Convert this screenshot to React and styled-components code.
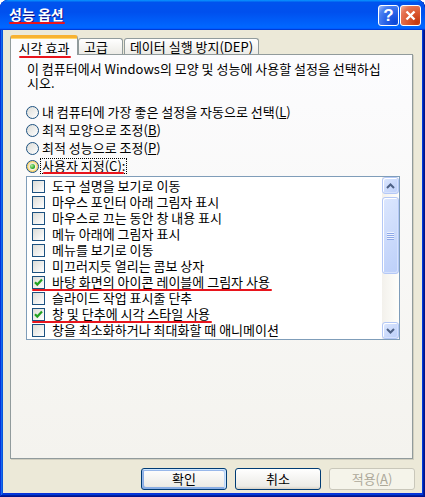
import React from 'react';
import styled, { createGlobalStyle, css } from 'styled-components';

const FONT = `"Noto Sans CJK KR", "Noto Sans", sans-serif`;

const Global = createGlobalStyle`
  html, body { margin: 0; padding: 0; background: #fff; }
  body { font-family: ${FONT}; font-size: 13px; color: #000; }
`;

const Window = styled.div`
  width: 425px;
  height: 497px;
  box-sizing: border-box;
  display: flex;
  flex-direction: column;
  background: #0831d9;
  border-radius: 8px 8px 0 0;
  box-shadow: inset -1px -1px #00138c, inset 1px 1px #0831d9, inset -2px -2px #001ea0,
    inset 2px 2px #166aee, inset -3px -3px #003bda, inset 3px 3px #0855dd;
  overflow: hidden;
`;

const TitleBar = styled.div`
  height: 30px;
  flex: none;
  display: flex;
  align-items: flex-start;
  justify-content: space-between;
  padding: 0 4px 0 9px;
  border-radius: 8px 8px 0 0;
  background: linear-gradient(180deg, #0997ff, #0053ee 8%, #0050ee 40%, #06f 88%, #06f 93%, #005bff 95%, #003dd7 96%, #003dd7);
`;

const Annot = styled.span`
  position: relative;
  display: inline-flex;
  align-items: center;
  &::after {
    content: '';
    position: absolute;
    left: ${(p) => p.$l ?? 0}px;
    right: ${(p) => p.$r ?? 0}px;
    bottom: ${(p) => p.$b ?? -2}px;
    height: 2px;
    border-radius: 1px;
    background: #e8141c;
  }
`;

const TitleText = styled.span`
  margin-top: 6px;
  color: #fff;
  font-weight: bold;
  font-size: 14px;
  line-height: 16px;
  text-shadow: 1px 1px #0f1089;
`;

const TitleButtons = styled.div`
  display: flex;
  gap: 1px;
  margin-top: 5px;
`;

const TitleBtn = styled.div`
  width: 21px;
  height: 21px;
  box-sizing: border-box;
  border: 1px solid #fff;
  border-radius: 3px;
  display: flex;
  align-items: center;
  justify-content: center;
  color: #fff;
  font-family: "Liberation Sans", Arial, sans-serif;
  font-weight: bold;
  font-size: 17px;
  line-height: 1;
  ${(p) =>
    p.$close
      ? css`background: radial-gradient(circle at 85% 85%, #c3380f 0%, #dc5a32 45%, #e67556 75%, #f2b8a3 100%);`
      : css`background: radial-gradient(circle at 85% 85%, #0a46d8 0%, #2b64e8 45%, #4d82f1 75%, #a9c2f7 100%);`}
`;

const Body = styled.div`
  flex: 1;
  margin: 0 3px 4px 3px;
  background: #ece9d8;
  padding: 5px 7px 3px 7px;
  display: flex;
  flex-direction: column;
  min-height: 0;
`;

const TabStrip = styled.div`
  height: 20px;
  flex: none;
  display: flex;
  align-items: flex-end;
  margin-bottom: -1px;
  position: relative;
  z-index: 1;
`;

const Tab = styled.div`
  width: ${(p) => p.$w}px;
  margin-left: ${(p) => p.$ml || 0}px;
  box-sizing: border-box;
  display: flex;
  align-items: center;
  justify-content: ${(p) => (p.$left ? 'flex-start' : 'center')};
  padding-left: ${(p) => (p.$left ? 5 : 0)}px;
  border: 1px solid #919b9c;
  border-bottom: none;
  border-radius: 3px 3px 0 0;
  line-height: 14px;
  white-space: nowrap;
  ${(p) =>
    p.$active
      ? css`
          height: 20px;
          padding-top: 2px;
          background: #fcfcfe;
          border-top: 3px solid #f8b230;
          box-shadow: inset 0 1px #ffd66b;
        `
      : css`
          height: 16px;
          margin-bottom: 1px;
          background: linear-gradient(180deg, #fff, #ecebe6);
        `}
`;

const Panel = styled.div`
  flex: 1;
  margin-right: 2px;
  border: 1px solid #919b9c;
  box-shadow: 1px 1px 0 #d0cebf;
  background: linear-gradient(180deg, #fcfcfe, #f4f3ee);
  padding: 7px 12px 0 15px;
  display: flex;
  flex-direction: column;
`;

const Para = styled.p`
  margin: 0;
  line-height: 14px;
  padding-left: 1px;
  white-space: nowrap;
`;

const RadioGroup = styled.div`
  margin-top: 13px;
  display: flex;
  flex-direction: column;
`;

const RadioRow = styled.div`
  height: 18px;
  display: flex;
  align-items: center;
  gap: 3px;
  line-height: 14px;
  white-space: nowrap;
`;

const RadioCircle = styled.span`
  width: 13px;
  height: 13px;
  flex: none;
  box-sizing: border-box;
  border-radius: 50%;
  border: 1px solid #1c5180;
  background: linear-gradient(135deg, #dcdcd7, #fff);
  display: inline-flex;
  align-items: center;
  justify-content: center;
  ${(p) =>
    p.$on &&
    css`
      box-shadow: inset 0 0 0 1px #f9d36a, inset 0 0 0 2px #fbe6a6;
      &::after {
        content: '';
        width: 5px;
        height: 5px;
        border-radius: 50%;
        background: radial-gradient(circle at 35% 35%, #b6ef9c, #21a121 70%);
      }
    `}
`;

const Focus = styled.span`
  outline: 1px dotted #000;
  outline-offset: 0;
  padding: 0 1px;
  margin-left: -1px;
`;

const U = styled.span`
  text-decoration: underline;
`;

const ListBox = styled.div`
  margin-top: 1px;
  height: 164px;
  box-sizing: border-box;
  border: 1px solid #7f9db9;
  background: #fff;
  display: flex;
`;

const Items = styled.div`
  flex: 1;
  padding-top: 1px;
  display: flex;
  flex-direction: column;
  overflow: hidden;
`;

const Item = styled.div`
  height: 16px;
  flex: none;
  display: flex;
  align-items: center;
  padding-left: 5px;
  line-height: 14px;
  white-space: nowrap;
`;

const ItemInner = styled.span`
  display: inline-flex;
  align-items: center;
  gap: 7px;
`;

const Check = styled.span`
  width: 13px;
  height: 13px;
  flex: none;
  box-sizing: border-box;
  border: 1px solid #1c5180;
  background: linear-gradient(135deg, #dcdcd7, #fff);
  display: inline-flex;
  align-items: center;
  justify-content: center;
`;

const ScrollBar = styled.div`
  width: 17px;
  flex: none;
  display: flex;
  flex-direction: column;
  background: linear-gradient(90deg, #f3f1ec, #fefefb);
`;

const sbPart = css`
  box-sizing: border-box;
  border: 1px solid #b4c8f6;
  border-radius: 3px;
  box-shadow: inset 1px 1px #fff, inset -1px -1px #d6e2fc;
  background: linear-gradient(135deg, #dce7fe, #bccff9);
  display: flex;
  align-items: center;
  justify-content: center;
`;

const SbButton = styled.div`
  ${sbPart};
  height: 17px;
  flex: none;
`;

const Thumb = styled.div`
  ${sbPart};
  margin-top: 3px;
  height: 77px;
  flex: none;
`;

const Grip = styled.span`
  width: 7px;
  height: 8px;
  background: repeating-linear-gradient(180deg, #eef3fe 0 1px, #8da8e8 1px 2px);
`;

const Spacer = styled.div`
  flex: 1;
`;

const ButtonRow = styled.div`
  margin-top: 9px;
  height: 22px;
  flex: none;
  display: flex;
  justify-content: flex-end;
  gap: 8px;
`;

const Button = styled.div`
  width: 86px;
  height: 22px;
  box-sizing: border-box;
  border-radius: 3px;
  display: flex;
  align-items: center;
  justify-content: center;
  line-height: 14px;
  ${(p) =>
    p.$disabled
      ? css`
          border: 1px solid #c9c7ba;
          background: #f5f4ea;
          color: #aca899;
        `
      : css`
          border: 1px solid #003c74;
          background: linear-gradient(180deg, #fff, #ecebe6 86%, #d6d0c5);
        `}
  ${(p) =>
    p.$default &&
    css`
      box-shadow: inset -1px 1px #cee7ff, inset 1px 2px #98b8ea, inset -2px 2px #bcd4f6,
        inset 1px -1px #89ade4, inset 2px -2px #89ade4;
    `}
`;

const Arrow = ({ down }) => (
  <svg width="9" height="6" viewBox="0 0 9 6">
    <path
      d={down ? 'M1 1 L4.5 4.5 L8 1' : 'M1 5 L4.5 1.5 L8 5'}
      fill="none"
      stroke="#4d6185"
      strokeWidth="2"
    />
  </svg>
);

const CheckMark = () => (
  <svg width="9" height="9" viewBox="0 0 9 9">
    <path d="M1 4.2 L3.3 6.6 L8 1.6" fill="none" stroke="#21a121" strokeWidth="2.2" />
  </svg>
);

const items = [
  { t: '도구 설명을 보기로 이동' },
  { t: '마우스 포인터 아래 그림자 표시' },
  { t: '마우스로 끄는 동안 창 내용 표시' },
  { t: '메뉴 아래에 그림자 표시' },
  { t: '메뉴를 보기로 이동' },
  { t: '미끄러지듯 열리는 콤보 상자' },
  { t: '바탕 화면의 아이콘 레이블에 그림자 사용', c: true, m: true },
  { t: '슬라이드 작업 표시줄 단추' },
  { t: '창 및 단추에 시각 스타일 사용', c: true, m: true },
  { t: '창을 최소화하거나 최대화할 때 애니메이션' },
];

export default function App() {
  return (
    <>
      <Global />
      <Window>
        <TitleBar>
          <TitleText>
            <Annot $b={-2} $r={-1}>성능 옵션</Annot>
          </TitleText>
          <TitleButtons>
            <TitleBtn>?</TitleBtn>
            <TitleBtn $close>
              <svg width="11" height="11" viewBox="0 0 11 11">
                <path d="M1.5 1.5 L9.5 9.5 M9.5 1.5 L1.5 9.5" stroke="#fff" strokeWidth="2.4" />
              </svg>
            </TitleBtn>
          </TitleButtons>
        </TitleBar>
        <Body>
          <TabStrip>
            <Tab $active $w={68}>
              <Annot $b={-3} $r={-2}>시각 효과</Annot>
            </Tab>
            <Tab $w={45} $left>고급</Tab>
            <Tab $w={135} $ml={1}>데이터 실행 방지(DEP)</Tab>
          </TabStrip>
          <Panel>
            <Para>
              이 컴퓨터에서 Windows의 모양 및 성능에 사용할 설정을 선택하십
              <br />
              시오.
            </Para>
            <RadioGroup>
              <RadioRow>
                <RadioCircle />
                <span>
                  내 컴퓨터에 가장 좋은 설정을 자동으로 선택(<U>L</U>)
                </span>
              </RadioRow>
              <RadioRow>
                <RadioCircle />
                <span>
                  최적 모양으로 조정(<U>B</U>)
                </span>
              </RadioRow>
              <RadioRow>
                <RadioCircle />
                <span>
                  최적 성능으로 조정(<U>P</U>)
                </span>
              </RadioRow>
              <RadioRow>
                <RadioCircle $on />
                <Focus>
                  <Annot $b={-1} $l={1} $r={1}>
                    사용자 지정(<U>C</U>):
                  </Annot>
                </Focus>
              </RadioRow>
            </RadioGroup>
            <ListBox>
              <Items>
                {items.map((it) => (
                  <Item key={it.t}>
                    {it.m ? (
                      <Annot $b={-2} $r={-2}>
                        <ItemInner>
                          <Check>{it.c && <CheckMark />}</Check>
                          <span>{it.t}</span>
                        </ItemInner>
                      </Annot>
                    ) : (
                      <ItemInner>
                        <Check>{it.c && <CheckMark />}</Check>
                        <span>{it.t}</span>
                      </ItemInner>
                    )}
                  </Item>
                ))}
              </Items>
              <ScrollBar>
                <SbButton>
                  <Arrow />
                </SbButton>
                <Thumb>
                  <Grip />
                </Thumb>
                <Spacer />
                <SbButton>
                  <Arrow down />
                </SbButton>
              </ScrollBar>
            </ListBox>
          </Panel>
          <ButtonRow>
            <Button $default>확인</Button>
            <Button>취소</Button>
            <Button $disabled>
              적용(<U>A</U>)
            </Button>
          </ButtonRow>
        </Body>
      </Window>
    </>
  );
}
